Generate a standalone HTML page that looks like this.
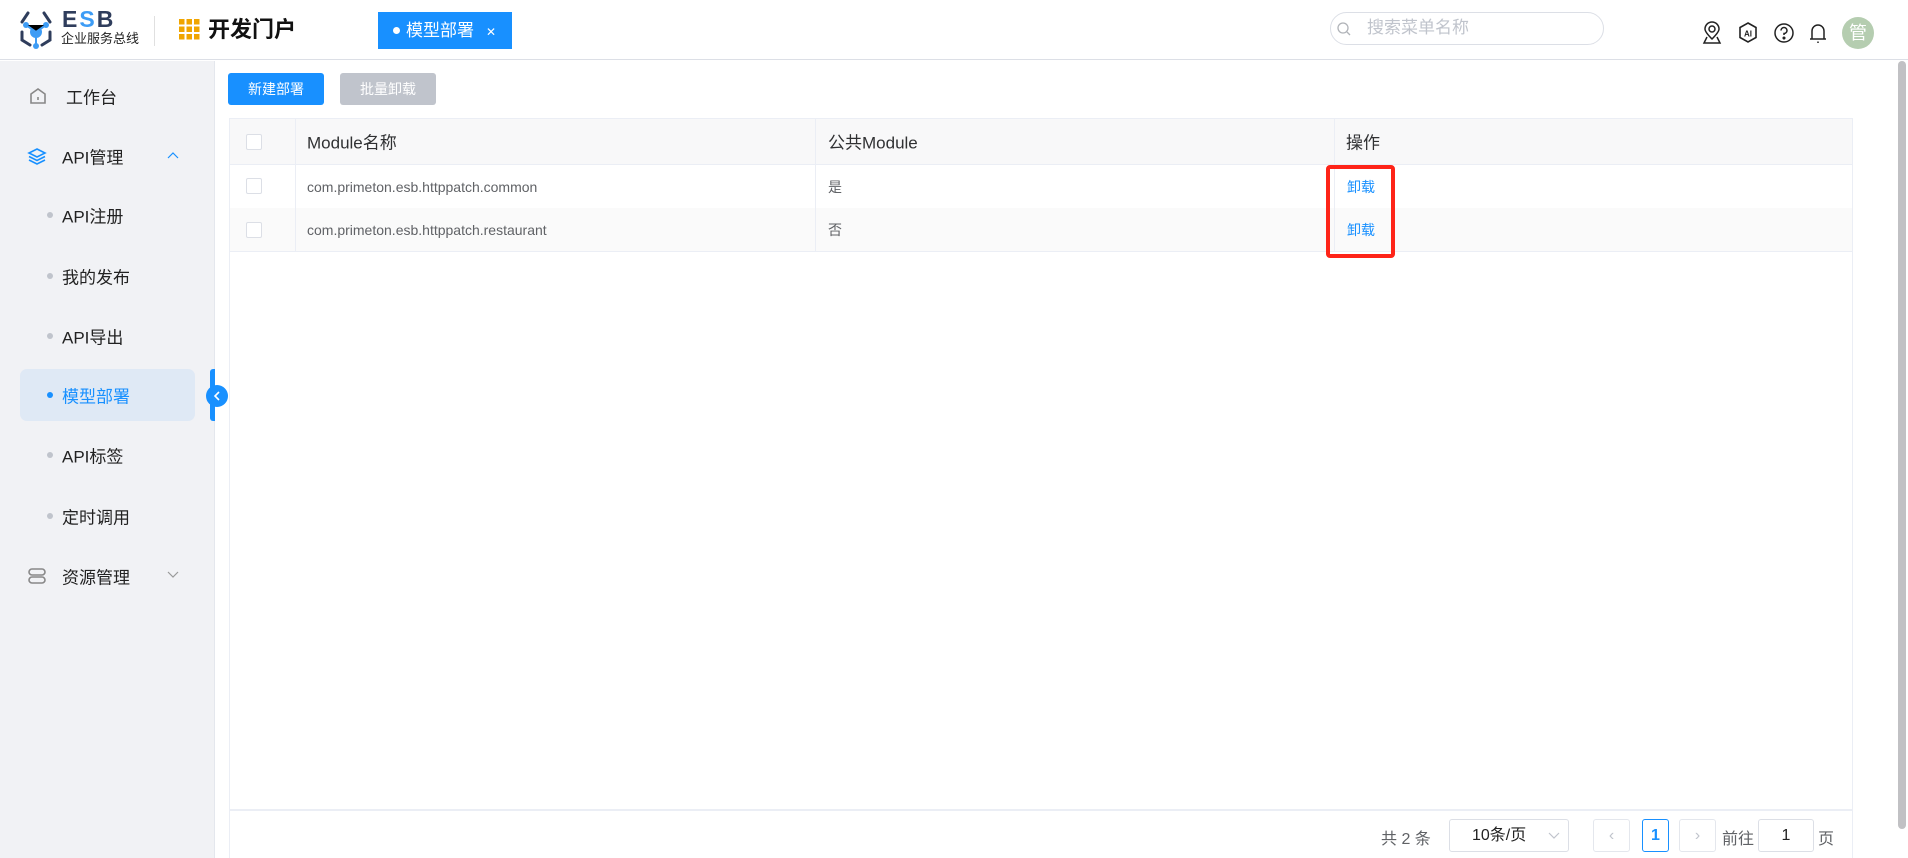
<!DOCTYPE html>
<html><head><meta charset="utf-8"><style>
*{box-sizing:border-box;margin:0;padding:0}
body{width:1908px;height:858px;overflow:hidden;background:#fff;font-family:"Liberation Sans","Noto Sans CJK SC",sans-serif;position:relative;color:#303133}
.a{position:absolute}
.hdr{left:0;top:0;width:1908px;height:60px;border-bottom:1px solid #dcdfe6;background:#fff}
.side{left:0;top:61px;width:215px;height:797px;background:#f1f2f5;border-right:1px solid #e4e7ed}
.mi{position:absolute;left:62px;font-size:17px;color:#222;transform:translateY(-50%)}
.dot{position:absolute;left:47px;width:6px;height:6px;border-radius:50%;background:#c0c4cc;transform:translateY(-50%)}
.btn{height:32px;border-radius:3px;color:#fff;font-size:14px;line-height:32px;text-align:center}
.cb{position:absolute;width:16px;height:16px;border:1px solid #dcdfe6;border-radius:2px;background:#fff;left:246px}
.hl{position:absolute;height:1px;background:#ebeef5}
.vl{position:absolute;width:1px;background:#ebeef5}
.td{position:absolute;font-size:14px;color:#606266;transform:translateY(-50%)}
.th{position:absolute;font-size:17px;color:#303133;transform:translateY(-50%)}
.pb{position:absolute;border:1px solid #dcdfe6;border-radius:3px;top:819px;height:33px;font-size:16px;text-align:center;line-height:31px}
</style></head><body>
<div class="a hdr"></div>
<svg class="a" style="left:18px;top:10px" width="42" height="40" viewBox="0 0 42 40">
<path d="M10 3 L4 12 M26 3 L32 12" stroke="#2f3d5c" stroke-width="3" fill="none" stroke-linecap="round"/>
<path d="M4 22 L4 30 L12 35 M32 22 L32 30 L24 35" stroke="#2f3d5c" stroke-width="3" fill="none" stroke-linecap="round"/>
<circle cx="18" cy="22" r="6" fill="#3d9cf5"/><circle cx="8" cy="15" r="3" fill="#3d9cf5"/><circle cx="28" cy="15" r="3" fill="#3d9cf5"/><circle cx="18" cy="36" r="3" fill="#3d9cf5"/>
<path d="M8 15 L18 22 L28 15 M18 22 L18 36" stroke="#3d9cf5" stroke-width="2"/>
</svg>
<div class="a" style="left:62px;top:7px;font-size:23px;font-weight:bold;color:#2f3d5c;letter-spacing:2px;line-height:24px">E<span style="color:#3d9cf5">S</span>B</div>
<div class="a" style="left:61px;top:31px;font-size:13px;color:#222;line-height:16px">企业服务总线</div>
<div class="a" style="left:154px;top:16px;width:1px;height:30px;background:#e0e0e0"></div>
<svg class="a" style="left:179px;top:19px" width="21" height="21" viewBox="0 0 21 21" fill="#f0a500">
<rect x="0" y="0" width="5.5" height="5.5"/><rect x="7.5" y="0" width="5.5" height="5.5"/><rect x="15" y="0" width="5.5" height="5.5"/>
<rect x="0" y="7.5" width="5.5" height="5.5"/><rect x="7.5" y="7.5" width="5.5" height="5.5"/><rect x="15" y="7.5" width="5.5" height="5.5"/>
<rect x="0" y="15" width="5.5" height="5.5"/><rect x="7.5" y="15" width="5.5" height="5.5"/><rect x="15" y="15" width="5.5" height="5.5"/></svg>
<div class="a" style="left:208px;top:14px;font-size:22px;font-weight:bold;color:#111;line-height:32px">开发门户</div>
<div class="a" style="left:378px;top:12px;width:134px;height:37px;background:#1890ff;color:#fff;font-size:17px;line-height:37px">
<span style="display:inline-block;width:7px;height:7px;border-radius:50%;background:#fff;margin:0 6px 2px 15px"></span>模型部署<span style="font-size:12px;margin-left:12px">✕</span></div>
<div class="a" style="left:1330px;top:12px;width:274px;height:33px;border:1px solid #dcdfe6;border-radius:17px"></div>
<svg class="a" style="left:1337px;top:22px" width="14" height="14"><circle cx="6" cy="6" r="5" stroke="#b0b3b8" stroke-width="1.3" fill="none"/><path d="M10 10 L13 13" stroke="#b0b3b8" stroke-width="1.3"/></svg>
<div class="a" style="left:1367px;top:17px;font-size:17px;color:#c0c4cc;line-height:22px">搜索菜单名称</div>
<svg class="a" style="left:1701px;top:21px" width="22" height="24" viewBox="0 0 22 24" fill="none" stroke="#222" stroke-width="1.5"><path d="M11 18 C6 13 4 10 4 8 A7 7 0 0 1 18 8 C18 10 16 13 11 18Z"/><circle cx="11" cy="8" r="3"/><path d="M6 16 L3 22 H19 L16 16"/></svg>
<svg class="a" style="left:1737px;top:21px" width="22" height="24" viewBox="0 0 22 24" fill="none" stroke="#222" stroke-width="1.6"><path d="M11 2 L19 6.5 V16.5 L11 21 L3 16.5 V6.5Z"/><text x="11" y="15.5" font-size="8" font-weight="bold" fill="#222" stroke="none" text-anchor="middle" font-family="Liberation Sans">AI</text></svg>
<svg class="a" style="left:1773px;top:22px" width="22" height="22" viewBox="0 0 22 22" fill="none" stroke="#222" stroke-width="1.5"><circle cx="11" cy="11" r="9"/><path d="M8 8.5 A3 3 0 1 1 11 11.5 V13"/><circle cx="11" cy="16" r="0.8" fill="#222"/></svg>
<svg class="a" style="left:1807px;top:21px" width="22" height="24" viewBox="0 0 22 24" fill="none" stroke="#222" stroke-width="1.5"><path d="M5 18 V10 A6 6 0 0 1 17 10 V18 Z M3 18 H19"/><path d="M11 20.5 V22"/></svg>
<div class="a" style="left:1842px;top:17px;width:32px;height:32px;border-radius:50%;background:#b5cdb0;color:#fff;font-size:18px;text-align:center;line-height:32px">管</div>
<div class="a side"></div>
<svg class="a" style="left:28px;top:86px" width="20" height="20" viewBox="0 0 20 20" fill="none" stroke="#888" stroke-width="1.6"><path d="M3 8 L10 3 L17 8 V17 H3Z"/><path d="M10 11 V14"/></svg>
<div class="mi" style="top:96px;left:66px">工作台</div>
<svg class="a" style="left:27px;top:147px" width="20" height="18" viewBox="0 0 20 18" fill="none" stroke="#1890ff" stroke-width="1.6"><path d="M10 2 L18 6 L10 10 L2 6Z"/><path d="M2 9.5 L10 13.5 L18 9.5"/><path d="M2 13 L10 17 L18 13"/></svg>
<div class="mi" style="top:156px">API管理</div>
<svg class="a" style="left:167px;top:151px" width="12" height="8"><path d="M1 7 L6 2 L11 7" stroke="#1890ff" fill="none" stroke-width="1.2"/></svg>
<div class="dot" style="top:215px"></div><div class="mi" style="top:215px">API注册</div>
<div class="dot" style="top:276px"></div><div class="mi" style="top:276px">我的发布</div>
<div class="dot" style="top:336px"></div><div class="mi" style="top:336px">API导出</div>
<div class="a" style="left:20px;top:369px;width:175px;height:52px;background:#dfe9f5;border-radius:7px"></div>
<div class="dot" style="top:395px;background:#1890ff"></div><div class="mi" style="top:395px;color:#1890ff">模型部署</div>
<div class="dot" style="top:455px"></div><div class="mi" style="top:455px">API标签</div>
<div class="dot" style="top:516px"></div><div class="mi" style="top:516px">定时调用</div>
<svg class="a" style="left:27px;top:567px" width="20" height="18" viewBox="0 0 20 18" fill="none" stroke="#888" stroke-width="1.6"><rect x="2" y="2" width="16" height="6" rx="3"/><rect x="2" y="10" width="16" height="6" rx="3"/></svg>
<div class="mi" style="top:576px">资源管理</div>
<svg class="a" style="left:167px;top:571px" width="12" height="8"><path d="M1 1 L6 6 L11 1" stroke="#999" fill="none" stroke-width="1.2"/></svg>
<div class="a" style="left:210px;top:369px;width:5px;height:52px;background:#1890ff;border-radius:3px 0 0 3px"></div>
<div class="a" style="left:206px;top:385px;width:22px;height:22px;border-radius:50%;background:#1890ff"></div>
<svg class="a" style="left:212px;top:390px" width="10" height="12"><path d="M7 2 L3 6 L7 10" stroke="#fff" fill="none" stroke-width="1.6"/></svg>
<div class="a" style="left:1898px;top:61px;width:8px;height:768px;background:#c1c1c4;border-radius:4px"></div>
<div class="a btn" style="left:228px;top:73px;width:96px;background:#1890ff">新建部署</div>
<div class="a btn" style="left:340px;top:73px;width:96px;background:#c0c4cc">批量卸载</div>
<div class="a" style="left:229px;top:118px;width:1623px;height:46px;background:#f8f8f9"></div>
<div class="hl" style="left:229px;top:118px;width:1623px"></div>
<div class="hl" style="left:229px;top:164px;width:1623px"></div>
<div class="hl" style="left:229px;top:208px;width:1623px"></div>
<div class="a" style="left:229px;top:208px;width:1623px;height:43px;background:#fafafa"></div>
<div class="hl" style="left:229px;top:251px;width:1623px"></div>
<div class="hl" style="left:229px;top:809px;width:1623px;height:2px"></div>
<div class="vl" style="left:229px;top:118px;height:740px"></div>
<div class="vl" style="left:1852px;top:118px;height:740px"></div>
<div class="vl" style="left:295px;top:118px;height:133px"></div>
<div class="vl" style="left:815px;top:118px;height:133px"></div>
<div class="vl" style="left:1334px;top:118px;height:133px"></div>
<div class="cb" style="top:134px"></div>
<div class="cb" style="top:178px"></div>
<div class="cb" style="top:222px"></div>
<div class="th" style="left:307px;top:141px">Module名称</div>
<div class="th" style="left:828px;top:141px">公共Module</div>
<div class="th" style="left:1346px;top:141px">操作</div>
<div class="td" style="left:307px;top:187px">com.primeton.esb.httppatch.common</div>
<div class="td" style="left:828px;top:187px">是</div>
<div class="td" style="left:1347px;top:187px;color:#1890ff">卸载</div>
<div class="td" style="left:307px;top:230px">com.primeton.esb.httppatch.restaurant</div>
<div class="td" style="left:828px;top:230px">否</div>
<div class="td" style="left:1347px;top:230px;color:#1890ff">卸载</div>
<div class="a" style="left:1326px;top:165px;width:69px;height:93px;border:4px solid #fe2418;border-radius:4px"></div>
<div class="a" style="left:1381px;top:825px;font-size:16px;color:#606266">共 2 条</div>
<div class="pb" style="left:1449px;width:120px;color:#222;text-align:left;padding-left:22px">10条/页</div>
<svg class="a" style="left:1548px;top:832px" width="12" height="8"><path d="M1 1 L6 6 L11 1" stroke="#c0c4cc" fill="none" stroke-width="1.2"/></svg>
<div class="pb" style="left:1593px;width:37px;color:#c0c4cc;border-color:#e4e7ed">‹</div>
<div class="pb" style="left:1642px;width:27px;color:#1890ff;border-color:#1890ff;font-weight:bold">1</div>
<div class="pb" style="left:1679px;width:37px;color:#c0c4cc;border-color:#e4e7ed">›</div>
<div class="a" style="left:1722px;top:825px;font-size:16px;color:#606266">前往</div>
<div class="pb" style="left:1758px;width:56px;color:#222">1</div>
<div class="a" style="left:1818px;top:825px;font-size:16px;color:#606266">页</div>
</body></html>
